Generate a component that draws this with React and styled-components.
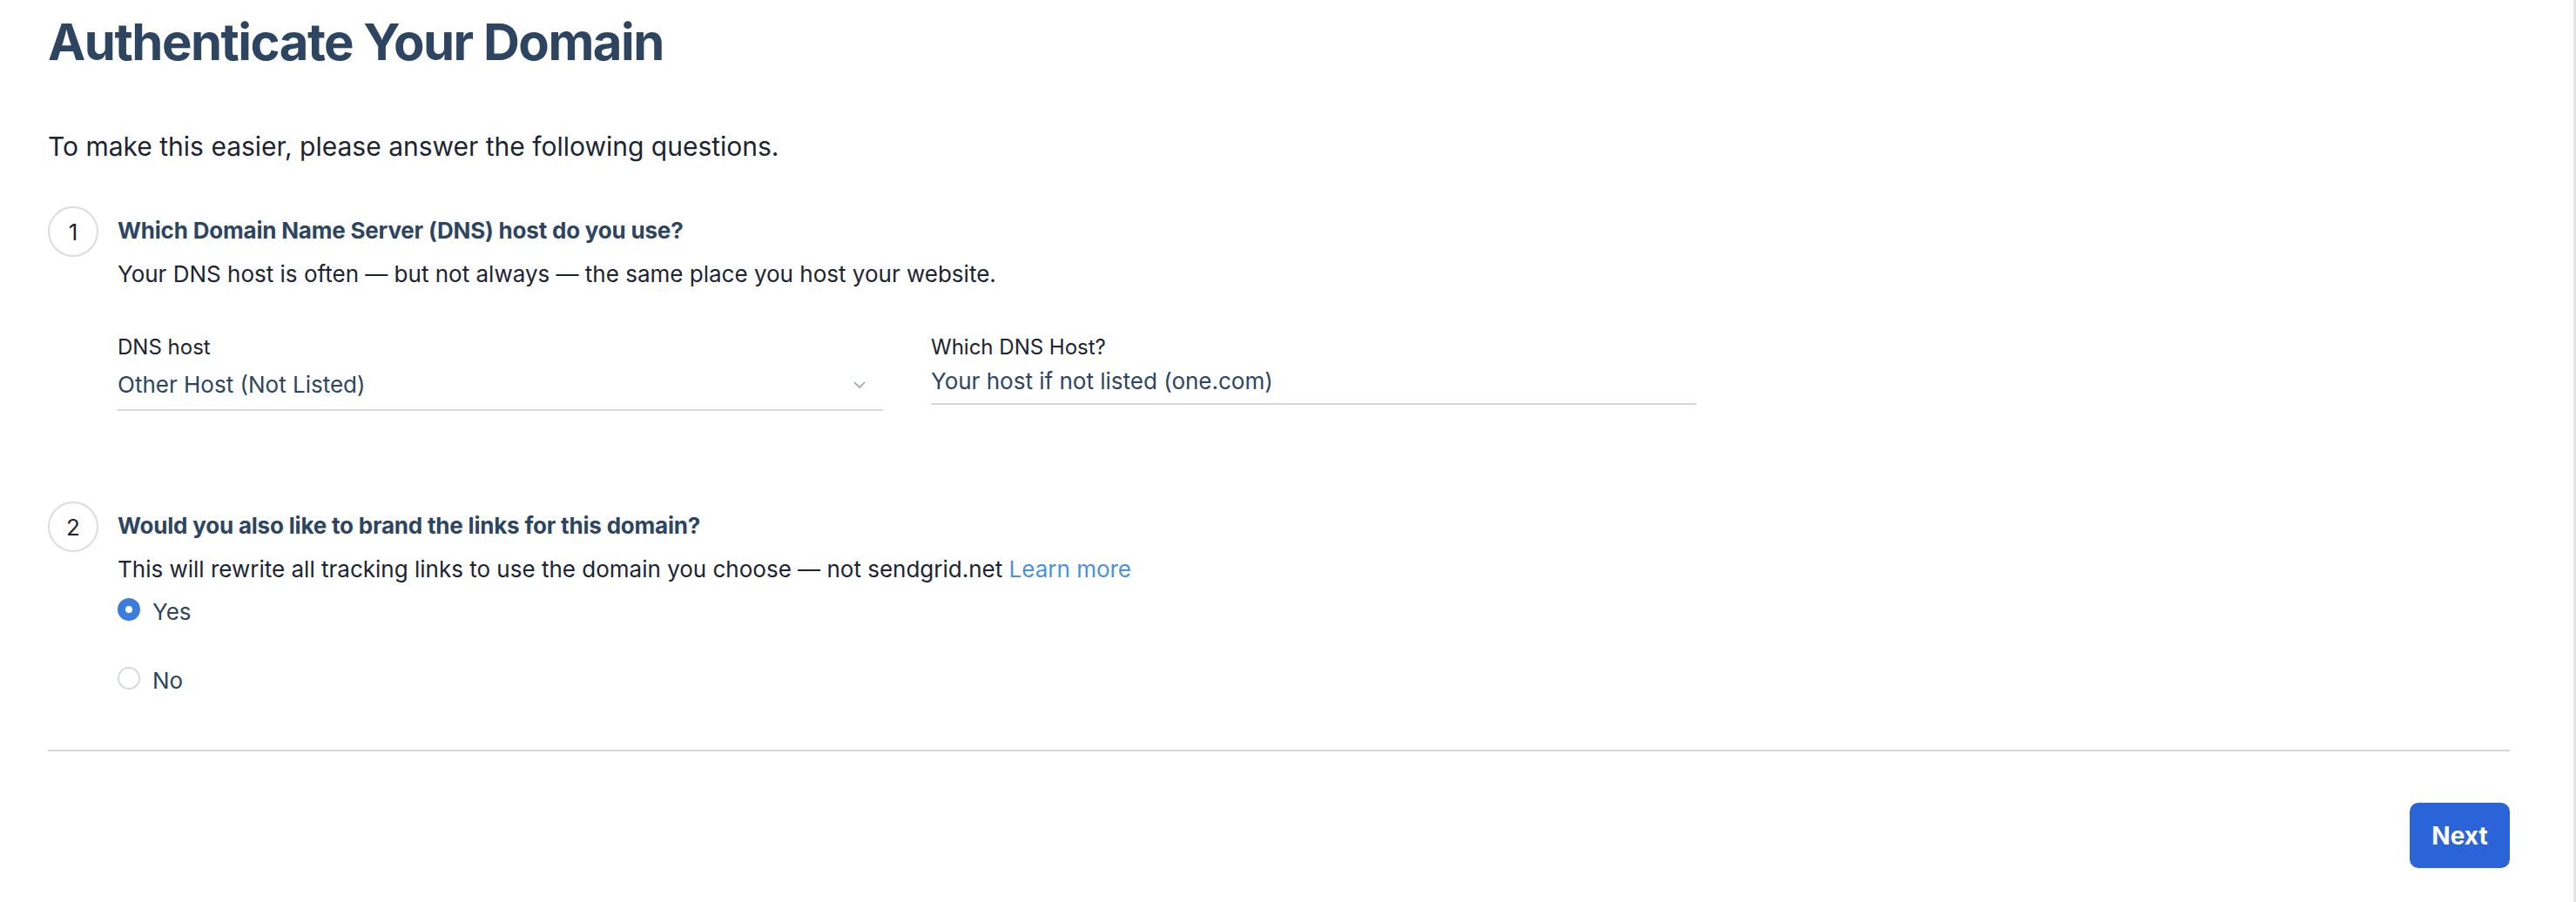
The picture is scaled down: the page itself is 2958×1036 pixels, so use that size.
import React from "react";
import styled, { createGlobalStyle } from "styled-components";

const GlobalStyle = createGlobalStyle`
  html, body {
    margin: 0;
    padding: 0;
    background: #fff;
  }
  body {
    font-family: Inter, "Noto Sans", "Liberation Sans", sans-serif;
    color: #1c2433;
  }
  * {
    box-sizing: border-box;
  }
`;

const Page = styled.div`
  display: flex;
  width: 100%;
  min-height: 1036px;
  border-right: 3px solid #e6e6e6;
  margin-right: 3px;
`;

const Main = styled.div`
  flex: 1;
  padding: 12px 73px 0 55px;
`;

const Title = styled.h1`
  margin: 0;
  font-size: 58px;
  line-height: 72px;
  font-weight: 700;
  letter-spacing: -1.5px;
  color: #2d4561;
`;

const Intro = styled.p`
  margin: 64px 0 0;
  font-size: 30px;
  line-height: 40px;
  color: #1c2433;
`;

const Step = styled.div`
  display: flex;
  gap: 22px;
  margin-top: ${(p) => p.$top}px;
`;

const StepNumber = styled.div`
  flex: none;
  width: 58px;
  height: 58px;
  border-radius: 50%;
  border: 2px solid #d9dde2;
  display: flex;
  align-items: center;
  justify-content: center;
  font-size: 26px;
  color: #1c2433;
`;

const StepBody = styled.div`
  flex: 1;
  padding-top: 10px;
`;

const Question = styled.div`
  font-size: 26px;
  line-height: 36px;
  font-weight: 700;
  color: #2d4561;
  letter-spacing: -0.2px;
`;

const Hint = styled.div`
  margin-top: 14px;
  font-size: 26px;
  line-height: 36px;
  color: #1c2433;
`;

const LearnMore = styled.a`
  color: #4a90e2;
  text-decoration: none;
`;

const Fields = styled.div`
  display: flex;
  gap: 55px;
  margin-top: 50px;
  align-items: flex-start;
`;

const Field = styled.div`
  width: 879px;
`;

const Label = styled.div`
  font-size: 24px;
  line-height: 32px;
  color: #1c2433;
`;

const SelectBox = styled.div`
  display: flex;
  align-items: center;
  justify-content: space-between;
  margin-top: 9px;
  padding: 0 20px 10px 0;
  border-bottom: 2px solid #d4d9de;
  font-size: 26px;
  line-height: 36px;
  color: #2d4561;
`;

const TextInput = styled.input`
  display: block;
  width: 100%;
  margin-top: 5px;
  padding: 0 0 7px;
  border: 0;
  border-bottom: 2px solid #d4d9de;
  outline: none;
  background: transparent;
  font-family: inherit;
  font-size: 26px;
  line-height: 36px;
  color: #2d4561;
  &::placeholder {
    color: #2d4561;
    opacity: 1;
  }
`;

const RadioList = styled.div`
  display: flex;
  flex-direction: column;
  gap: 39px;
  margin-top: 10px;
`;

const RadioRow = styled.label`
  display: flex;
  align-items: center;
  gap: 14px;
  height: 40px;
  font-size: 26px;
  color: #2d4561;
`;

const RadioDot = styled.span`
  flex: none;
  width: 26px;
  height: 26px;
  border-radius: 50%;
  margin-top: -4px;
  background: ${(p) => (p.$checked ? "#3b7ddd" : "#fff")};
  border: 2px solid ${(p) => (p.$checked ? "#3b7ddd" : "#d4d9de")};
  display: flex;
  align-items: center;
  justify-content: center;
  &::after {
    content: "";
    width: 8px;
    height: 8px;
    border-radius: 50%;
    background: #fff;
    display: ${(p) => (p.$checked ? "block" : "none")};
  }
`;

const Divider = styled.hr`
  margin: 60px 0 0;
  border: 0;
  height: 2px;
  background: #d4d9de;
`;

const Footer = styled.div`
  display: flex;
  justify-content: flex-end;
  margin-top: 59px;
`;

const NextButton = styled.button`
  width: 115px;
  height: 75px;
  border: 0;
  border-radius: 10px;
  background: #2a64d8;
  color: #fff;
  font-family: inherit;
  font-size: 28px;
  font-weight: 700;
  cursor: pointer;
`;

function Chevron() {
  return (
    <svg width="14" height="8" viewBox="0 0 14 8" fill="none">
      <path d="M1 1l6 6 6-6" stroke="#8e9bab" strokeWidth="1.5" />
    </svg>
  );
}

export default function App() {
  return (
    <>
      <GlobalStyle />
      <Page>
        <Main>
          <Title>Authenticate Your Domain</Title>
          <Intro>To make this easier, please answer the following questions.</Intro>

          <Step $top={49}>
            <StepNumber>1</StepNumber>
            <StepBody>
              <Question>Which Domain Name Server (DNS) host do you use?</Question>
              <Hint>
                Your DNS host is often — but not always — the same place you host your website.
              </Hint>
              <Fields>
                <Field>
                  <Label>DNS host</Label>
                  <SelectBox>
                    <span>Other Host (Not Listed)</span>
                    <Chevron />
                  </SelectBox>
                </Field>
                <Field>
                  <Label>Which DNS Host?</Label>
                  <TextInput placeholder="Your host if not listed (one.com)" />
                </Field>
              </Fields>
            </StepBody>
          </Step>

          <Step $top={104}>
            <StepNumber>2</StepNumber>
            <StepBody>
              <Question>Would you also like to brand the links for this domain?</Question>
              <Hint>
                This will rewrite all tracking links to use the domain you choose — not sendgrid.net{" "}
                <LearnMore href="#">Learn more</LearnMore>
              </Hint>
              <RadioList>
                <RadioRow>
                  <RadioDot $checked />
                  Yes
                </RadioRow>
                <RadioRow>
                  <RadioDot />
                  No
                </RadioRow>
              </RadioList>
            </StepBody>
          </Step>

          <Divider />
          <Footer>
            <NextButton>Next</NextButton>
          </Footer>
        </Main>
      </Page>
    </>
  );
}
